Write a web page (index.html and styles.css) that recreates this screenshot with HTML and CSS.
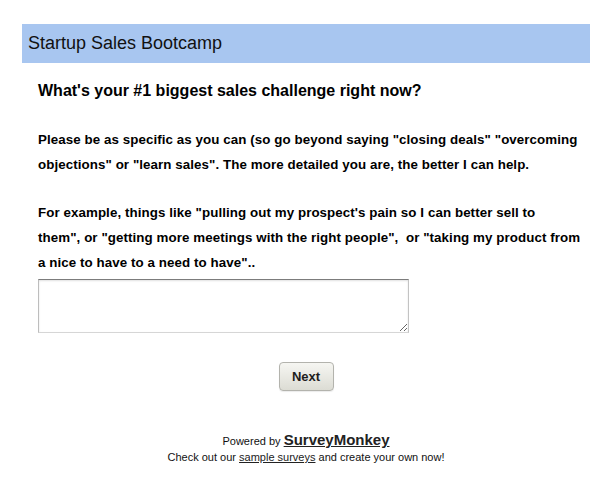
FILE: index.html
```html
<!DOCTYPE html>
<html>
<head>
<meta charset="utf-8">
<title>Startup Sales Bootcamp</title>
<link rel="stylesheet" href="styles.css">
</head>
<body>
<div class="survey">
  <div class="header">Startup Sales Bootcamp</div>
  <div class="content">
    <div class="question">What's your #1 biggest sales challenge right now?</div>
    <p class="desc">Please be as specific as you can (so go beyond saying "closing deals" "overcoming<br>objections" or "learn sales". The more detailed you are, the better I can help.</p>
    <p class="desc second">For example, things like "pulling out my prospect's pain so I can better sell to<br>them", or "getting more meetings with the right people",&nbsp; or "taking my product from<br>a nice to have to a need to have"..</p>
    <textarea class="answer"></textarea>
  </div>
  <div class="actions"><button class="next" type="button">Next</button></div>
  <div class="footer">
    <div class="powered">Powered by <a class="brand" href="#">SurveyMonkey</a></div>
    <div class="cta">Check out our <a class="link" href="#">sample surveys</a> and create your own now!</div>
  </div>
</div>
</body>
</html>
```
FILE: styles.css
```css
html, body {
  margin: 0;
  padding: 0;
  background: #ffffff;
}
body {
  font-family: "Liberation Sans", Arial, Helvetica, sans-serif;
  color: #000;
}
.survey {
  margin: 24px 23px 0 22px;
}
.header {
  height: 39px;
  line-height: 39px;
  background: #a8c6f0;
  padding-left: 6px;
  font-size: 18px;
  color: #111;
}
.content {
  padding: 0 0 0 16px;
}
.question {
  margin-top: 18px;
  font-size: 16px;
  line-height: 20px;
  font-weight: bold;
}
.desc {
  margin: 26px 0 0;
  font-size: 13.33px;
  line-height: 25px;
  font-weight: bold;
  letter-spacing: 0.08px;
  white-space: nowrap;
}
.desc.second {
  margin-top: 23px;
}
.answer {
  display: block;
  box-sizing: border-box;
  width: 371px;
  height: 54px;
  margin: 4px 0 0;
  border: 1px solid;
  border-color: #7c7c7c #c3c3c3 #d6d6d6 #bdbdbd;
  box-shadow: inset 0 1px 2px rgba(0, 0, 0, 0.12);
  background: #fff;
  padding: 2px;
  font: 13px "Liberation Sans", Arial, sans-serif;
}
.actions {
  margin-top: 29px;
  text-align: center;
}
.next {
  width: 55px;
  height: 29px;
  padding: 0;
  border: 1px solid #b3b3ad;
  border-radius: 4px;
  background: linear-gradient(#f6f6f2, #dcdcd4);
  box-shadow: 0 1px 1px rgba(0, 0, 0, 0.08);
  font-family: "Liberation Sans", Arial, sans-serif;
  font-size: 13px;
  font-weight: bold;
  color: #1e1e1e;
  vertical-align: top;
}
.footer {
  margin-top: 40px;
  text-align: center;
  font-size: 11px;
  color: #111;
}
.powered {
  line-height: 17px;
}
.brand {
  font-size: 15px;
  font-weight: bold;
  color: #222;
  text-decoration: underline;
}
.cta {
  line-height: 14px;
}
.link {
  color: #222;
  text-decoration: underline;
}
```
